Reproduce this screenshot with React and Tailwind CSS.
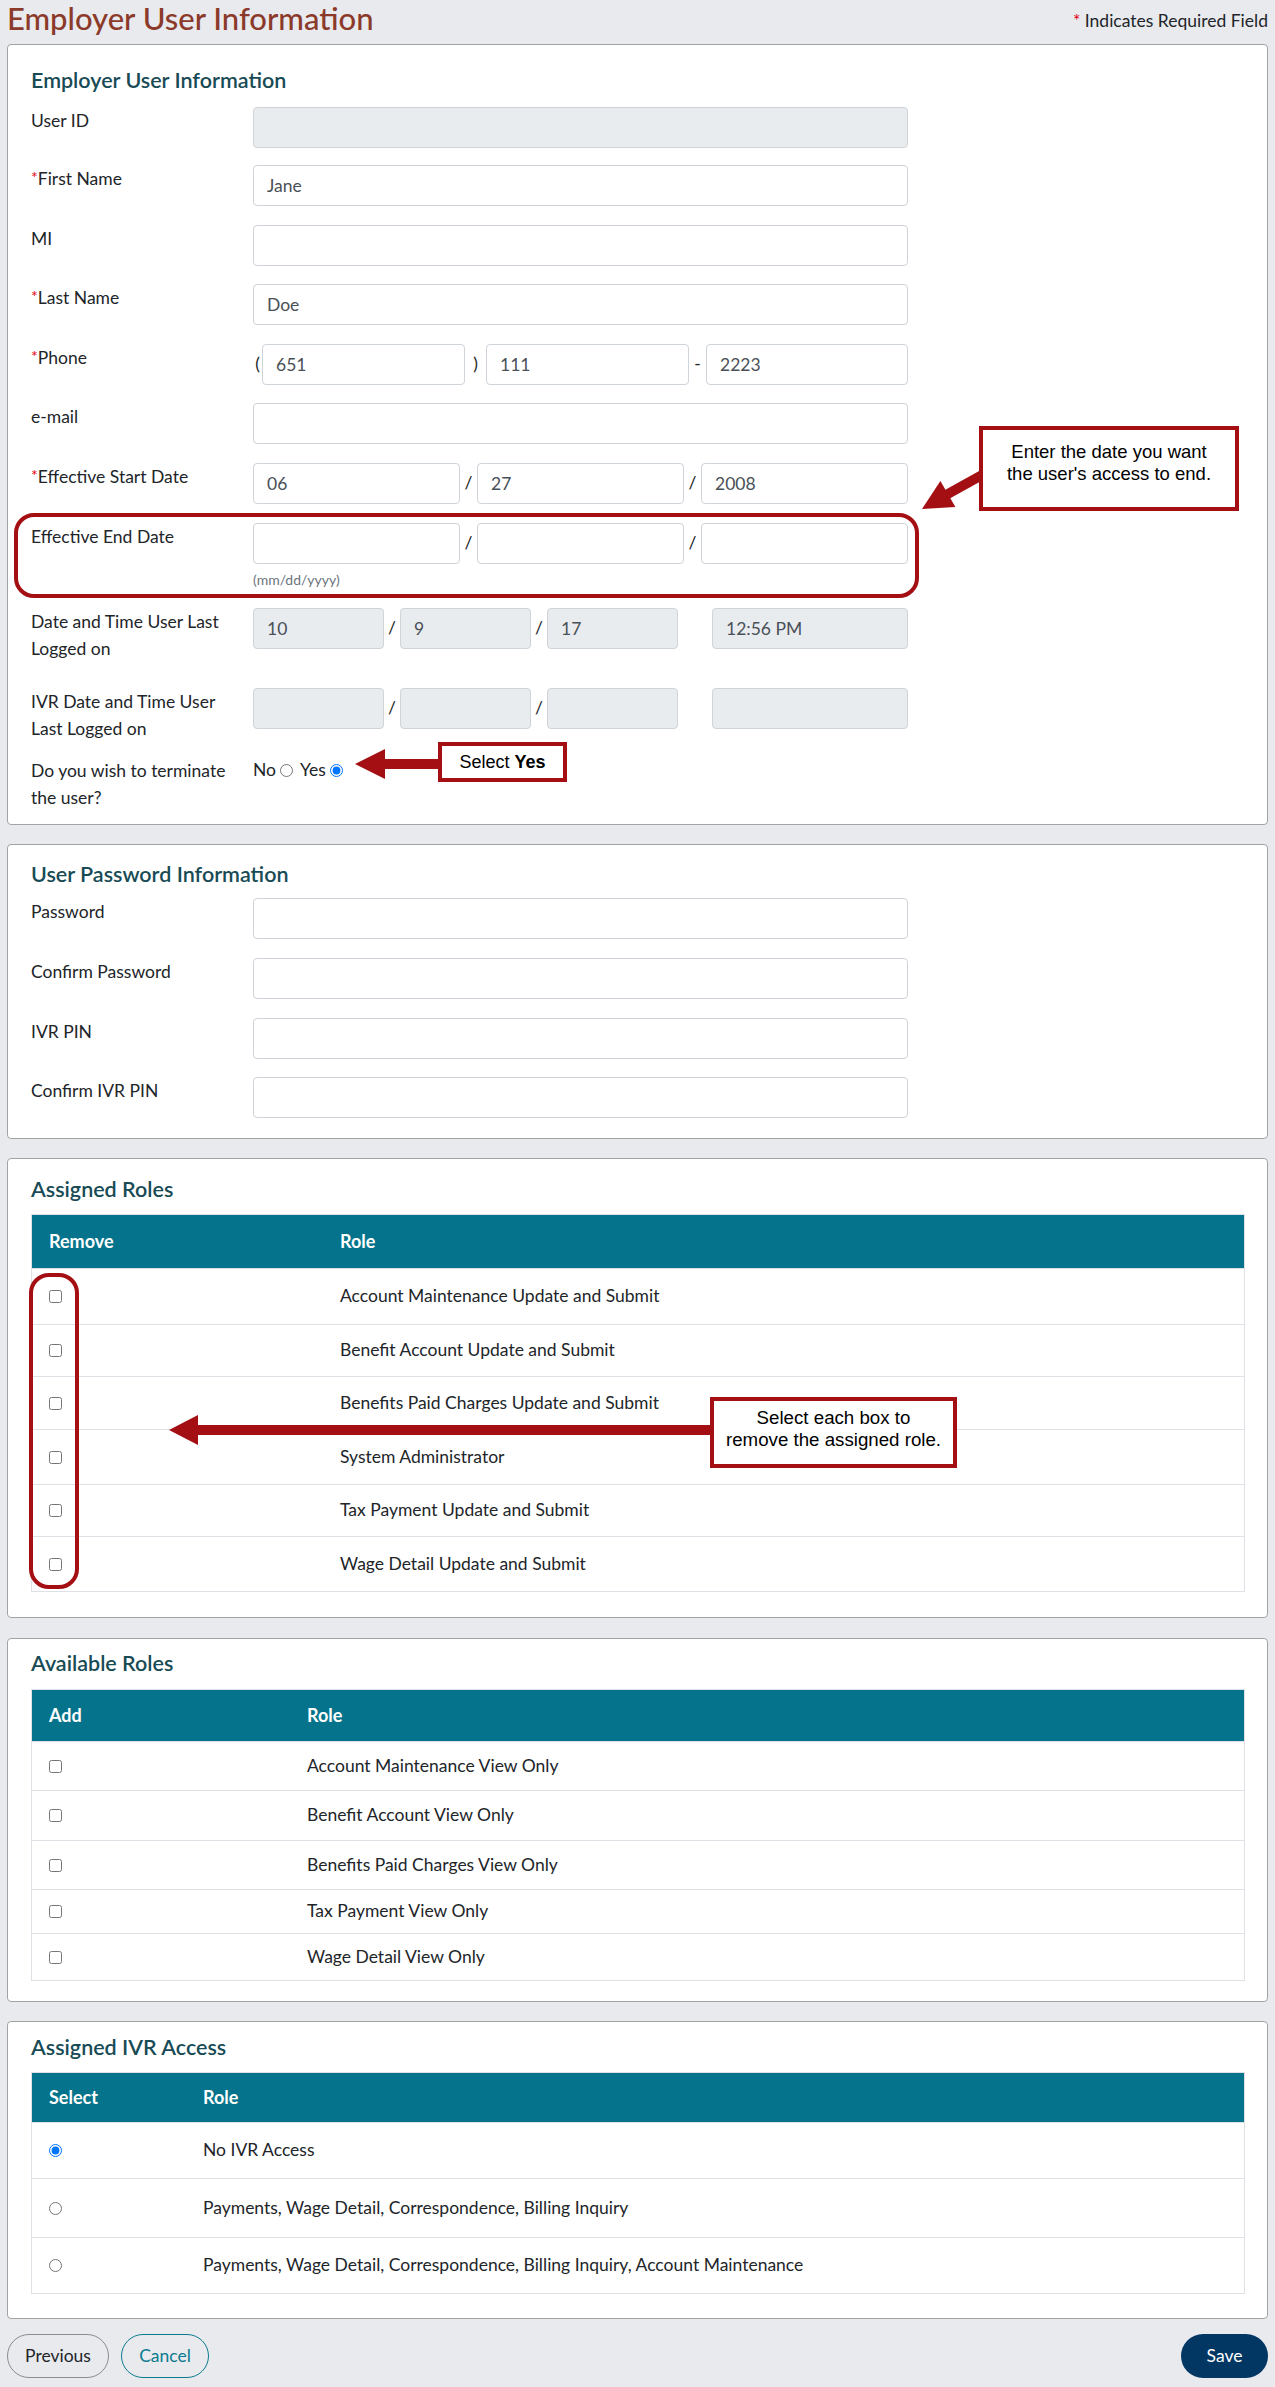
import React from "react";

function Label({ children, req }) {
  return (
    <div className="w-[222px] shrink-0 whitespace-nowrap text-[17.5px] leading-[27px] text-[#212529]">
      {req && <span className="align-top text-[16px] leading-[23px] text-[#e3000f]">*</span>}
      {children}
    </div>
  );
}

function Field({ value = "", disabled = false, w = "w-full" }) {
  return (
    <input
      readOnly
      value={value}
      className={`${w} h-[41px] shrink-0 rounded-[4px] border border-[#ced4da] px-[13px] text-[17.5px] text-[#495057] outline-none ${
        disabled ? "bg-[#e9ecef]" : "bg-white"
      }`}
    />
  );
}

function Sep({ ch, w }) {
  return <div className={`${w} shrink-0 text-center text-[17.5px] text-[#212529]`}>{ch}</div>;
}

function Row({ h, label, req, children }) {
  return (
    <div className={`flex ${h}`}>
      <Label req={req}>{label}</Label>
      <div className="w-[655px]">{children}</div>
    </div>
  );
}

function Heading({ children, cls }) {
  return <h2 className={`h-[26px] text-[21.5px] font-semibold leading-[26px] text-[#184b55] ${cls}`}>{children}</h2>;
}

function Card({ cls, children }) {
  return <div className={`rounded-[4px] border border-[#a3a3a3] bg-white pl-[23px] pr-[22px] ${cls}`}>{children}</div>;
}

function Table({ headH, col1, col1w, rows, radio }) {
  return (
    <div className="w-full">
      <div className={`flex ${headH} items-center border border-[#dee2e6] bg-[#05738b] text-[18px] font-bold text-white`}>
        <div className={`${col1w} shrink-0 pl-[17px]`}>{col1}</div>
        <div className="pl-[18px]">Role</div>
      </div>
      <div className="border-x border-[#dee2e6]">
        {rows.map((r, i) => (
          <div key={i} className={`flex ${r.h} items-center border-b border-[#dee2e6] text-[17.5px] text-[#212529]`}>
            <div className={`${col1w} flex shrink-0 items-center pl-[17px]`}>
              {radio ? (
                <input type="radio" name="ivr" defaultChecked={!!r.checked} className="m-0 h-[13px] w-[13px]" />
              ) : (
                <input type="checkbox" className="m-0 h-[13px] w-[13px]" />
              )}
            </div>
            <div className="pl-[18px]">{r.text}</div>
          </div>
        ))}
      </div>
    </div>
  );
}

export default function App() {
  const assigned = [
    { h: "h-[56px]", text: "Account Maintenance Update and Submit" },
    { h: "h-[52px]", text: "Benefit Account Update and Submit" },
    { h: "h-[53px]", text: "Benefits Paid Charges Update and Submit" },
    { h: "h-[55px]", text: "System Administrator" },
    { h: "h-[52px]", text: "Tax Payment Update and Submit" },
    { h: "h-[55px]", text: "Wage Detail Update and Submit" },
  ];
  const available = [
    { h: "h-[49px]", text: "Account Maintenance View Only" },
    { h: "h-[50px]", text: "Benefit Account View Only" },
    { h: "h-[49px]", text: "Benefits Paid Charges View Only" },
    { h: "h-[44px]", text: "Tax Payment View Only" },
    { h: "h-[47px]", text: "Wage Detail View Only" },
  ];
  const ivr = [
    { h: "h-[56px]", text: "No IVR Access", checked: true },
    { h: "h-[59px]", text: "Payments, Wage Detail, Correspondence, Billing Inquiry" },
    { h: "h-[56px]", text: "Payments, Wage Detail, Correspondence, Billing Inquiry, Account Maintenance" },
  ];

  return (
    <div className="relative min-h-[2387px] w-full bg-[#e9eaee] px-[7px] pb-[9px] font-['Lato',sans-serif] text-[#212529]">
      {/* Page header */}
      <div className="flex h-[44px] items-start justify-between">
        <h1 className="text-[31px] font-medium leading-[36px] text-[#8b3a2a]">Employer User Information</h1>
        <div className="pt-[9px] text-[17.5px] leading-[24px] text-[#212529]">
          <span className="text-[#e3000f]">*</span> Indicates Required Field
        </div>
      </div>

      {/* Card 1 */}
      <Card cls="pt-[22px] pb-[13px]">
        <Heading cls="mb-[14px]">Employer User Information</Heading>
        <Row h="h-[58px]" label="User ID">
          <Field disabled />
        </Row>
        <Row h="h-[60px]" label="First Name" req>
          <Field value="Jane" />
        </Row>
        <Row h="h-[59px]" label="MI">
          <Field />
        </Row>
        <Row h="h-[60px]" label="Last Name" req>
          <Field value="Doe" />
        </Row>
        <Row h="h-[59px]" label="Phone" req>
          <div className="flex items-center">
            <Sep ch="(" w="w-[9px]" />
            <Field value="651" w="w-[203px]" />
            <Sep ch=")" w="w-[21px]" />
            <Field value="111" w="w-[203px]" />
            <Sep ch="-" w="w-[17px]" />
            <Field value="2223" w="w-[202px]" />
          </div>
        </Row>
        <Row h="h-[60px]" label="e-mail">
          <Field />
        </Row>
        <Row h="h-[60px]" label="Effective Start Date" req>
          <div className="flex items-center">
            <Field value="06" w="w-[207px]" />
            <Sep ch="/" w="w-[17px]" />
            <Field value="27" w="w-[207px]" />
            <Sep ch="/" w="w-[17px]" />
            <Field value="2008" w="w-[207px]" />
          </div>
        </Row>
        <Row h="h-[85px]" label="Effective End Date">
          <div className="flex items-center">
            <Field w="w-[207px]" />
            <Sep ch="/" w="w-[17px]" />
            <Field w="w-[207px]" />
            <Sep ch="/" w="w-[17px]" />
            <Field w="w-[207px]" />
          </div>
          <div className="mt-[8px] text-[14px] leading-[16px] text-[#6c757d]">(mm/dd/yyyy)</div>
        </Row>
        <Row
          h="h-[80px]"
          label={
            <>
              Date and Time User Last
              <br />
              Logged on
            </>
          }
        >
          <div className="flex items-center">
            <Field value="10" w="w-[131px]" disabled />
            <Sep ch="/" w="w-[16px]" />
            <Field value="9" w="w-[131px]" disabled />
            <Sep ch="/" w="w-[16px]" />
            <Field value="17" w="w-[131px]" disabled />
            <div className="w-[34px] shrink-0" />
            <Field value="12:56 PM" w="w-[196px]" disabled />
          </div>
        </Row>
        <Row
          h="h-[69px]"
          label={
            <>
              IVR Date and Time User
              <br />
              Last Logged on
            </>
          }
        >
          <div className="flex items-center">
            <Field w="w-[131px]" disabled />
            <Sep ch="/" w="w-[16px]" />
            <Field w="w-[131px]" disabled />
            <Sep ch="/" w="w-[16px]" />
            <Field w="w-[131px]" disabled />
            <div className="w-[34px] shrink-0" />
            <Field w="w-[196px]" disabled />
          </div>
        </Row>
        <Row
          h="h-[54px]"
          label={
            <>
              Do you wish to terminate
              <br />
              the user?
            </>
          }
        >
          <div className="flex h-[27px] items-center text-[17.5px]">
            <span>No</span>
            <input type="radio" name="term" className="m-0 ml-[4px] mr-[7px] h-[13px] w-[13px]" />
            <span>Yes</span>
            <input type="radio" name="term" defaultChecked className="m-0 ml-[4px] h-[13px] w-[13px]" />
          </div>
        </Row>
      </Card>

      {/* Card 2 */}
      <Card cls="mt-[19px] pt-[16px] pb-[20px]">
        <Heading cls="mb-[11px]">User Password Information</Heading>
        <Row h="h-[60px]" label="Password">
          <Field />
        </Row>
        <Row h="h-[60px]" label="Confirm Password">
          <Field />
        </Row>
        <Row h="h-[59px]" label="IVR PIN">
          <Field />
        </Row>
        <Row h="h-[41px]" label="Confirm IVR PIN">
          <Field />
        </Row>
      </Card>

      {/* Card 3 */}
      <Card cls="mt-[19px] pt-[17px] pb-[25px]">
        <Heading cls="mb-[12px]">Assigned Roles</Heading>
        <Table headH="h-[55px]" col1="Remove" col1w="w-[290px]" rows={assigned} />
      </Card>

      {/* Card 4 */}
      <Card cls="mt-[20px] pt-[11px] pb-[20px]">
        <Heading cls="mb-[13px]">Available Roles</Heading>
        <Table headH="h-[53px]" col1="Add" col1w="w-[257px]" rows={available} />
      </Card>

      {/* Card 5 */}
      <Card cls="mt-[19px] pt-[12px] pb-[24px]">
        <Heading cls="mb-[12px]">Assigned IVR Access</Heading>
        <Table headH="h-[51px]" col1="Select" col1w="w-[153px]" rows={ivr} radio />
      </Card>

      {/* Buttons */}
      <div className="mt-[15px] flex h-[44px] items-center">
        <button className="h-[44px] w-[102px] rounded-full border border-[#8c8c8c] text-[17.5px] text-[#212529]">Previous</button>
        <button className="ml-[12px] h-[44px] w-[88px] rounded-full border border-[#0b7a8f] text-[17.5px] text-[#0b7a8f]">Cancel</button>
        <button className="ml-auto h-[44px] w-[87px] rounded-full bg-[#023764] text-[17.5px] text-white">Save</button>
      </div>

      {/* Annotations */}
      <div className="pointer-events-none absolute left-[14px] top-[513px] h-[85px] w-[905px] rounded-[20px] border-[4px] border-[#a30f13]" />
      <div className="pointer-events-none absolute left-[29px] top-[1273px] h-[316px] w-[50px] rounded-[20px] border-[4px] border-[#a30f13]" />

      <svg className="absolute left-[900px] top-[460px]" width="90" height="60" viewBox="0 0 90 60">
        <line x1="82" y1="15" x2="46" y2="35" stroke="#a30f13" strokeWidth="10" />
        <polygon points="22,49 55.4,47 40.4,21" fill="#a30f13" />
      </svg>
      <div className="absolute left-[979px] top-[426px] h-[85px] w-[260px] border-[4px] border-[#a30f13] bg-white pt-[11px] text-center font-['Liberation_Sans',Arial,sans-serif] text-[18.5px] leading-[22px] text-black">
        Enter the date you want
        <br />
        the user's access to end.
      </div>

      <svg className="absolute left-[350px] top-[745px]" width="92" height="40" viewBox="0 0 92 40">
        <rect x="34" y="14" width="58" height="10" fill="#a30f13" />
        <polygon points="5,19 35,4 35,34" fill="#a30f13" />
      </svg>
      <div className="absolute left-[438px] top-[742px] flex h-[40px] w-[129px] items-center justify-center border-[4px] border-[#a30f13] bg-white font-['Liberation_Sans',Arial,sans-serif] text-[18px] text-black">
        Select&nbsp;<b>Yes</b>
      </div>

      <svg className="absolute left-[160px] top-[1410px]" width="555" height="40" viewBox="0 0 555 40">
        <rect x="37" y="15" width="518" height="10" fill="#a30f13" />
        <polygon points="9,20 38,5 38,35" fill="#a30f13" />
      </svg>
      <div className="absolute left-[710px] top-[1397px] h-[71px] w-[247px] border-[4px] border-[#a30f13] bg-white pt-[6px] text-center font-['Liberation_Sans',Arial,sans-serif] text-[18.7px] leading-[22px] text-black">
        Select each box to
        <br />
        remove the assigned role.
      </div>
    </div>
  );
}
